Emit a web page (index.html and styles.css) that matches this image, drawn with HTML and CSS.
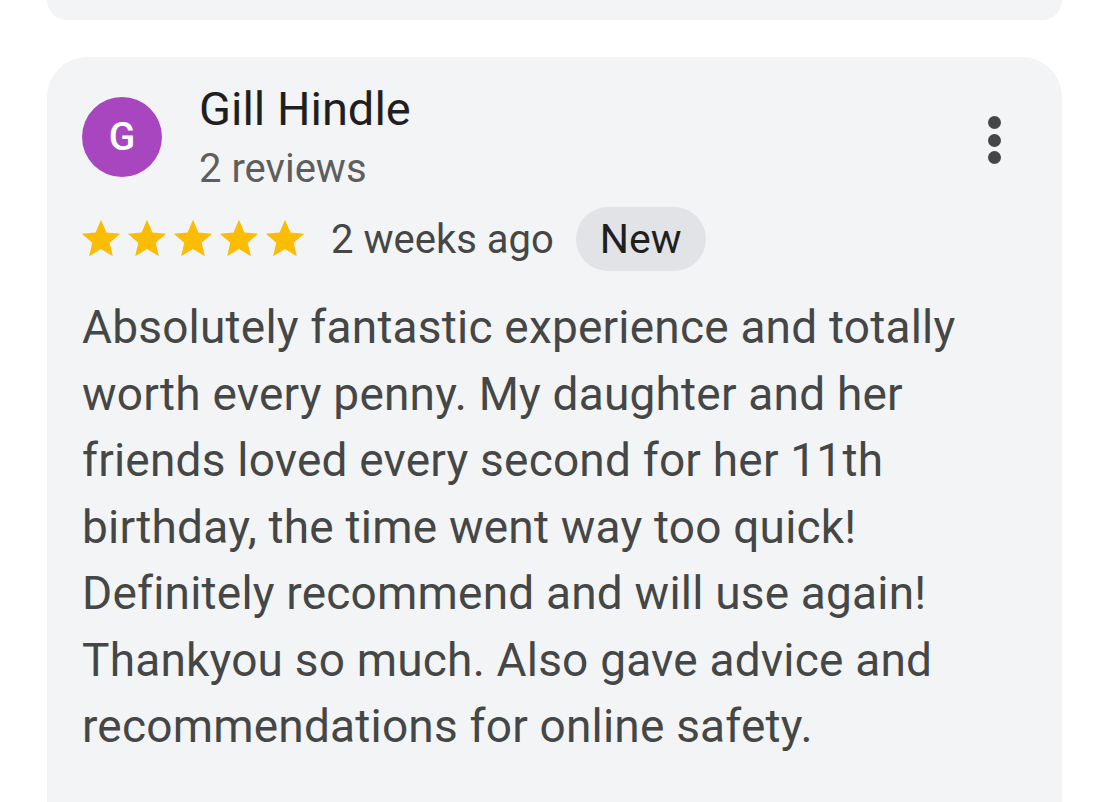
FILE: index.html
```html
<!DOCTYPE html>
<html lang="en">
<head>
    <meta charset="UTF-8">
    <meta name="viewport" content="width=device-width, initial-scale=1.0">
    <title>Review</title>
    <link rel="stylesheet" href="styles.css">
</head>
<body>
    <div class="card card-prev"></div>

    <div class="card review">
        <header class="review-head">
            <div class="avatar">G</div>
            <div class="author">
                <div class="author-name">Gill Hindle</div>
                <div class="author-meta">2 reviews</div>
            </div>
            <button class="menu" aria-label="More">
                <span></span><span></span><span></span>
            </button>
        </header>

        <div class="rating-row">
            <div class="stars">
                <svg viewBox="0 0 24 24"><path d="M12 17.27L18.18 21l-1.64-7.03L22 9.24l-7.19-.61L12 2 9.19 8.63 2 9.24l5.46 4.73L5.82 21z"/></svg>
                <svg viewBox="0 0 24 24"><path d="M12 17.27L18.18 21l-1.64-7.03L22 9.24l-7.19-.61L12 2 9.19 8.63 2 9.24l5.46 4.73L5.82 21z"/></svg>
                <svg viewBox="0 0 24 24"><path d="M12 17.27L18.18 21l-1.64-7.03L22 9.24l-7.19-.61L12 2 9.19 8.63 2 9.24l5.46 4.73L5.82 21z"/></svg>
                <svg viewBox="0 0 24 24"><path d="M12 17.27L18.18 21l-1.64-7.03L22 9.24l-7.19-.61L12 2 9.19 8.63 2 9.24l5.46 4.73L5.82 21z"/></svg>
                <svg viewBox="0 0 24 24"><path d="M12 17.27L18.18 21l-1.64-7.03L22 9.24l-7.19-.61L12 2 9.19 8.63 2 9.24l5.46 4.73L5.82 21z"/></svg>
            </div>
            <span class="when">2 weeks ago</span>
            <span class="chip">New</span>
        </div>

        <p class="review-text">Absolutely fantastic experience and totally worth every penny. My daughter and her friends loved every second for her 11th birthday, the time went way too quick! Definitely recommend and will use again! Thankyou so much. Also gave advice and recommendations for online safety.</p>
    </div>
</body>
</html>
```

FILE: styles.css
```css
body {
    margin: 0;
    background: #fff;
    font-family: Roboto, "Noto Sans", sans-serif;
    overflow: hidden;
}

.card {
    margin: 0 48px 0 47px;
    background: #f3f4f6;
}

.card-prev {
    height: 20px;
    border-radius: 0 0 40px 40px;
    margin-bottom: 37px;
}

.review {
    padding: 40px 35px 60px 35px;
    border-radius: 40px 40px 0 0;
    height: 800px;
}

.review-head {
    display: flex;
    align-items: flex-start;
}

.avatar {
    width: 80px;
    height: 80px;
    border-radius: 50%;
    background: #a846bf;
    color: #fff;
    font-size: 39px;
    font-weight: 500;
    display: flex;
    align-items: center;
    justify-content: center;
    flex-shrink: 0;
}

.author {
    margin-left: 37px;
    margin-top: -18px;
    flex: 1;
}

.author-name {
    font-size: 47px;
    color: #1f1f1f;
    line-height: 60px;
}

.author-meta {
    font-size: 40px;
    color: #5e5e5e;
    line-height: 60px;
}

.menu {
    border: none;
    background: none;
    padding: 0;
    margin: 19px 26px 0 0;
    display: flex;
    flex-direction: column;
    gap: 4.5px;
}

.menu span {
    width: 13px;
    height: 13px;
    border-radius: 50%;
    background: #444746;
}

.rating-row {
    display: flex;
    align-items: center;
    margin-top: 8px;
}

.stars {
    display: flex;
    margin-left: -4px;
}

.stars svg {
    width: 46px;
    height: 46px;
    fill: #fbbc04;
}

.when {
    font-size: 40px;
    color: #444746;
    margin-left: 23px;
}

.chip {
    margin-left: 22px;
    background: #e1e3e6;
    color: #1f1f1f;
    font-size: 41px;
    height: 64px;
    line-height: 64px;
    padding: 0 24px;
    border-radius: 32px;
}

.review-text {
    margin: 23px 0 0;
    font-size: 46px;
    letter-spacing: 0.2px;
    line-height: 66.5px;
    color: #444746;
}
```
